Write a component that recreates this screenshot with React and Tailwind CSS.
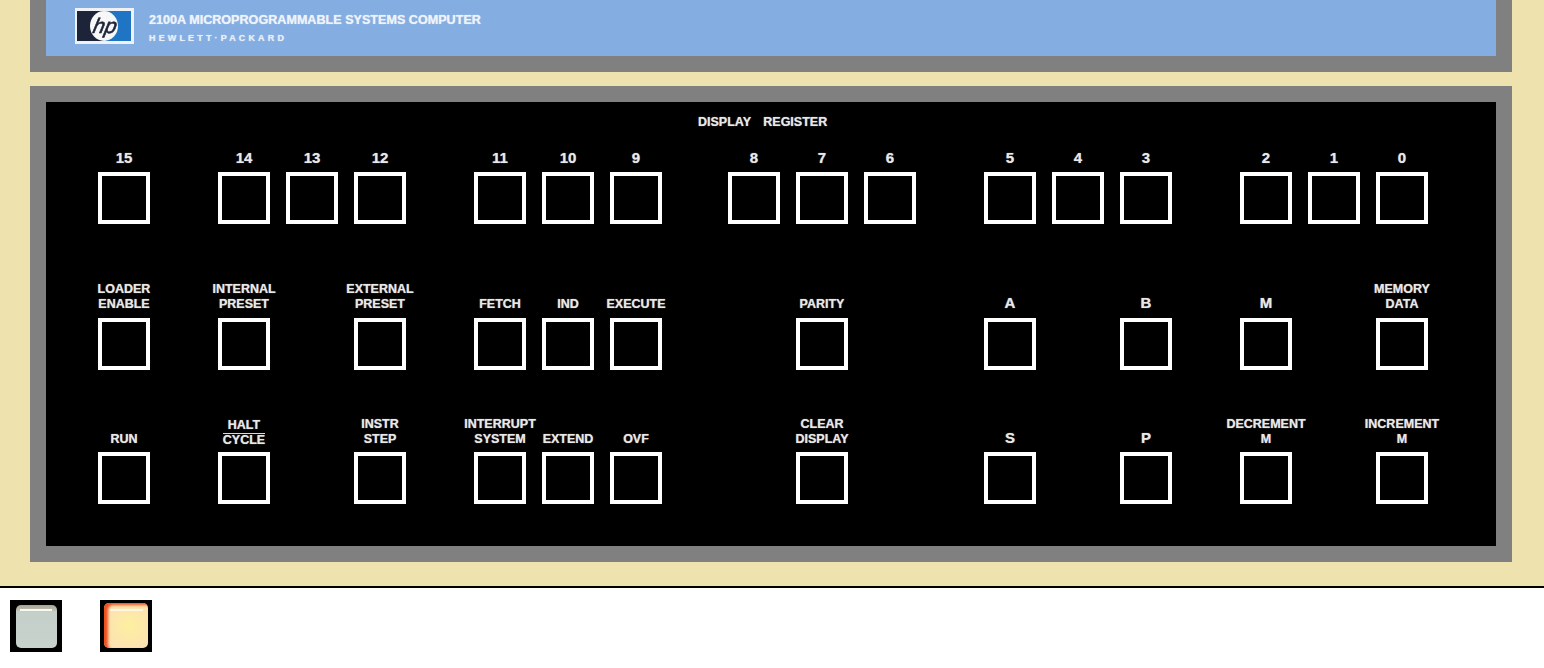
import React from 'react';

// one track per lamp position on the panel, widths taken from the lamp spacing
const gridClass = 'grid grid-cols-[120px_68px_68px_120px_68px_68px_118px_68px_68px_120px_68px_68px_120px_68px_68px_52px]';

const registerRow = ['15', '14', '13', '12', '11', '10', '9', '8', '7', '6', '5', '4', '3', '2', '1', '0'];

const middleRow = [
  ['LOADER', 'ENABLE'], ['INTERNAL', 'PRESET'], null, ['EXTERNAL', 'PRESET'],
  ['FETCH'], ['IND'], ['EXECUTE'], null, ['PARITY'], null,
  ['A'], null, ['B'], ['M'], null, ['MEMORY', 'DATA'],
];

const bottomRow = [
  ['RUN'], ['HALT', 'CYCLE'], null, ['INSTR', 'STEP'],
  ['INTERRUPT', 'SYSTEM'], ['EXTEND'], ['OVF'], null, ['CLEAR', 'DISPLAY'], null,
  ['S'], null, ['P'], ['DECREMENT', 'M'], null, ['INCREMENT', 'M'],
];

const Lamp = ({ lines, labelPad }) => {
  const letter = lines.length === 1 && lines[0].length === 1 && !/\d/.test(lines[0]);
  const big = letter || /^\d+$/.test(lines[0]);
  const fraction = lines[0] === 'HALT';
  return (
    <div className="flex w-[52px] flex-col items-center">
      <div className={`flex h-[30px] w-[52px] flex-col items-center justify-end whitespace-nowrap font-bold text-[#e8e8e8] [text-shadow:0_0_1px_#aaaaaa] ${labelPad} ${big ? 'text-[15px] leading-[15px]' : 'text-[12.5px] leading-[15px]'}`}>
        {lines.map((line, i) => (
          <span key={line} className={`${fraction && i === 1 ? 'border-t border-[#d8d8d8] leading-[13px]' : ''} ${letter ? 'mb-[2px]' : ''}`}>{line}</span>
        ))}
      </div>
      <div className="h-[52px] w-[52px] border-4 border-white bg-black"></div>
    </div>
  );
};

const LampRow = ({ cells, className, labelPad }) => (
  <div className={`${gridClass} ${className}`}>
    {cells.map((lines, i) => (
      <div key={i}>{lines && <Lamp lines={lines} labelPad={labelPad} />}</div>
    ))}
  </div>
);

const HpLogo = () => (
  <svg width="59" height="36" viewBox="0 0 59 36" className="shrink-0 blur-[0.4px]">
    <rect width="59" height="36" fill="#eef2f6" />
    <rect x="2" y="3" width="27" height="30" fill="#1d2338" />
    <rect x="29" y="3" width="27" height="30" fill="#1f74c4" />
    <ellipse cx="29" cy="18" rx="14" ry="15" fill="#f7f7f7" />
    <text x="29" y="25" textAnchor="middle" fontFamily="Liberation Sans" fontStyle="italic" fontSize="21" fill="#1d2338" stroke="#1d2338" strokeWidth="0.6" transform="skewX(-12) translate(5 0)">hp</text>
  </svg>
);

export default function App() {
  return (
    <div className="min-h-[668px] bg-white font-['Liberation_Sans',Arial,sans-serif]">
      <div className="border-b-2 border-black bg-[#eee2ae] pb-6 pl-[30px] pr-8">
        <div className="bg-[#808080] px-4 pb-4">
          <div className="flex h-14 items-start gap-[15px] bg-[#84ade1] pl-[29px] pt-2">
            <HpLogo />
            <div className="pt-[3px] font-bold">
              <div className="text-[12.6px] leading-[18px] text-[#eef3fa] [text-shadow:0_0_1px_#dfe8f5]">2100A MICROPROGRAMMABLE SYSTEMS COMPUTER</div>
              <div className="mt-[3px] text-[9px] leading-[13px] tracking-[3.15px] text-[#e6eef9] [text-shadow:0_0_1px_#dfe8f5]">HEWLETT·PACKARD</div>
            </div>
          </div>
        </div>
        <div className="mt-[14px] bg-[#808080] p-4">
          <div className="h-[444px] bg-black pl-[52px]">
            <div className="pl-[600px] pt-3 text-[12.5px] font-bold leading-4 text-[#e8e8e8] [text-shadow:0_0_1px_#aaaaaa] [word-spacing:9px]">DISPLAY REGISTER</div>
            <LampRow className="mt-3" labelPad="pb-[7px]" cells={registerRow.map((n) => [n])} />
            <LampRow className="mt-[64px]" labelPad="pb-[6px]" cells={middleRow} />
            <LampRow className="mt-[52px]" labelPad="pb-[5px]" cells={bottomRow} />
          </div>
        </div>
      </div>
      <div className="flex gap-[38px] pl-[10px] pt-3">
        <div className="h-[52px] w-[52px] bg-black pl-[6px] pt-[5px]">
          <div className="relative h-[43px] w-[41px] rounded-[5px] bg-[linear-gradient(#a8a698_0,#b9b9ac_10%,#c3cfc8_16%,#c6d2cb_100%)] blur-[0.5px]">
            <div className="absolute left-1 right-[5px] top-1 h-[1.5px] bg-[#fafaf4]"></div>
          </div>
        </div>
        <div className="h-[52px] w-[52px] bg-black pl-1 pt-[3px]">
          <div className="relative h-[45px] w-[44px] rounded-[5px] bg-[radial-gradient(circle_at_58%_50%,#fdf09f,#fde0b4_80%)] shadow-[inset_4px_2px_3px_#ee4f1c] blur-[0.5px]">
            <div className="absolute left-[6px] right-[5px] top-[6px] h-[1.5px] bg-[#fff6e8]"></div>
          </div>
        </div>
      </div>
    </div>
  );
}
